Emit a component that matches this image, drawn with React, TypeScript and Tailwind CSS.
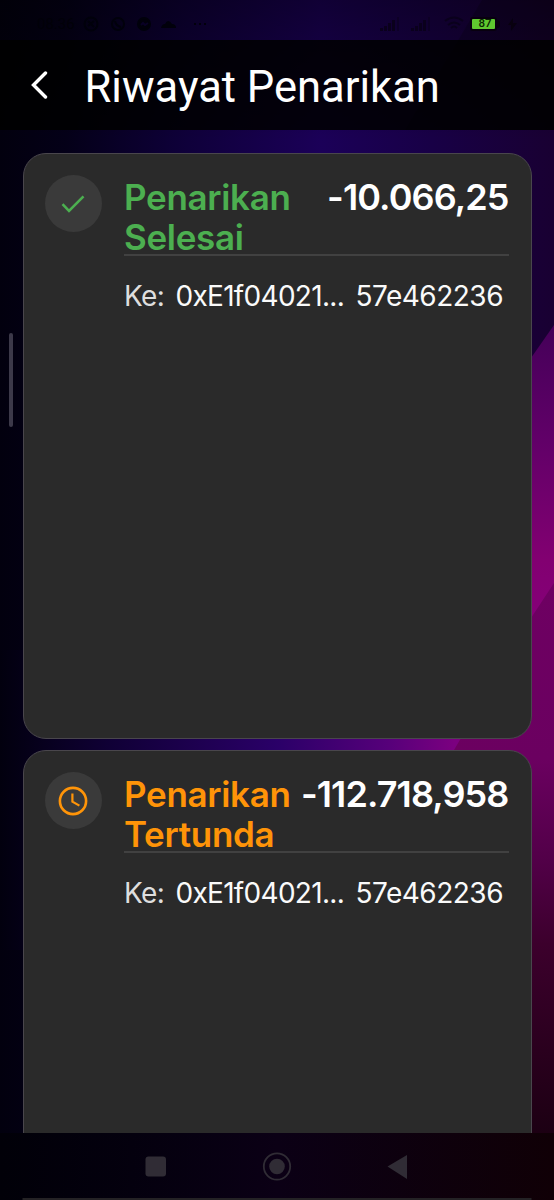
const withdrawals = [
  {
    status: "done",
    title: "Penarikan Selesai",
    amount: "-10.066,25",
    from: "0xE1f04021...",
    to: "57e462236",
  },
  {
    status: "pending",
    title: "Penarikan Tertunda",
    amount: "-112.718,958",
    from: "0xE1f04021...",
    to: "57e462236",
  },
];

function Wallpaper() {
  return (
    <svg
      className="absolute inset-0 -z-10"
      width="554"
      height="1200"
      viewBox="0 0 554 1200"
      aria-hidden="true"
    >
      <defs>
        <linearGradient id="base" x1="0" x2="1" y1="0" y2="0">
          <stop offset="0" stopColor="#02000e" />
          <stop offset="0.12" stopColor="#040018" />
          <stop offset="0.32" stopColor="#0e0038" />
          <stop offset="0.58" stopColor="#1b0058" />
          <stop offset="0.78" stopColor="#180046" />
          <stop offset="1" stopColor="#190032" />
        </linearGradient>
        <linearGradient id="top" x1="0" x2="0" y1="0" y2="1">
          <stop offset="0" stopColor="#000" stopOpacity="0.4" />
          <stop offset="1" stopColor="#000" stopOpacity="0" />
        </linearGradient>
        <linearGradient id="mid" x1="0" x2="1" y1="0" y2="0">
          <stop offset="0" stopColor="#02000e" />
          <stop offset="0.04" stopColor="#040016" />
          <stop offset="0.2" stopColor="#100036" />
          <stop offset="0.5" stopColor="#2a0068" />
          <stop offset="0.7" stopColor="#56007a" />
          <stop offset="0.82" stopColor="#7b0080" />
          <stop offset="1" stopColor="#7b0070" />
        </linearGradient>
        <linearGradient id="band" gradientUnits="userSpaceOnUse" x1="0" x2="0" y1="320" y2="620">
          <stop offset="0" stopColor="#430058" />
          <stop offset="0.4" stopColor="#610068" />
          <stop offset="0.8" stopColor="#820071" />
          <stop offset="1" stopColor="#850078" />
        </linearGradient>
        <linearGradient id="low" gradientUnits="userSpaceOnUse" x1="0" x2="0" y1="580" y2="1140">
          <stop offset="0" stopColor="#6e0062" />
          <stop offset="0.32" stopColor="#6b0060" />
          <stop offset="0.5" stopColor="#520048" />
          <stop offset="0.65" stopColor="#3c002c" />
          <stop offset="1" stopColor="#1b0012" />
        </linearGradient>
      </defs>
      <rect width="554" height="1200" fill="url(#base)" />
      <rect width="554" height="140" fill="url(#top)" />
      <path d="M482 0H554V130H405Z" fill="#000" opacity="0.2" />
      <rect y="650" width="554" height="300" fill="url(#mid)" />
      <path d="M554 325L531 358V760H554Z" fill="url(#band)" />
      <path d="M554 583L531 618L454 750L320 1000L210 1150H554Z" fill="url(#low)" />
    </svg>
  );
}

function Signal() {
  return (
    <svg width="22" height="15" viewBox="0 0 22 15" fill="#0a001c">
      <rect x="0" y="11" width="3" height="3" />
      <rect x="4" y="9" width="3" height="5" />
      <rect x="8" y="6" width="3" height="8" />
      <rect x="12" y="3" width="3" height="11" />
      <rect x="17" y="0" width="2" height="14" opacity="0.5" />
    </svg>
  );
}

function StatusBar() {
  return (
    <div className="flex h-10 items-center pt-2 pr-[37px] pl-[37px]">
      <span className="w-[42px] font-[Roboto] text-[15px] leading-4 text-[#010008]">08.36</span>
      <svg width="130" height="16" viewBox="0 0 130 16" fill="none" stroke="#01000b" strokeWidth="2">
        <circle cx="12" cy="8" r="6.5" />
        <path d="M9 10l6-5M9 5l6 6" />
        <circle cx="39" cy="8" r="6" />
        <path d="M36 5q1 5 6 6" />
        <circle cx="65" cy="8" r="6" fill="#01000b" />
        <path d="M62 9l2-2 2 2 3-2" stroke="#090025" />
        <path d="M82 12q1-4 4-4q3-6 7 0q4 0 4 4z" fill="#01000b" stroke="none" />
        <path d="M115 8h2m3 0h2m3 0h2" />
      </svg>
      <div className="ml-auto flex items-center">
        <Signal />
        <span className="w-[9px]" />
        <Signal />
        <svg className="ml-[11px]" width="20" height="16" viewBox="0 0 20 16" fill="none" stroke="#0a001c" strokeWidth="2">
          <path d="M1 5q9-7 18 0M4 9q6-5 12 0M7 12q3-3 6 0" />
        </svg>
        <span className="ml-[6px] flex h-[14px] w-[27px] items-center justify-center rounded-[3px] border-2 border-[#08000f] bg-[#5fc82f] pl-[3px] font-[Roboto] text-[11.5px] leading-none font-medium text-[#0b2503]">
          87
        </span>
        <span className="h-2 w-[3px] rounded-r-sm bg-[#08000f]" />
        <svg className="ml-[8px]" width="9" height="13" viewBox="0 0 9 13" fill="#08000f">
          <path d="M5 0L0 7h3v6l6-8H5z" />
        </svg>
      </div>
    </div>
  );
}

function ClockIcon() {
  return (
    <svg width="30" height="30" viewBox="0 0 30 30" fill="none" stroke="#ff9408">
      <circle cx="15" cy="15" r="13.1" strokeWidth="2.6" />
      <path d="M14.4 7.4V15.6L21.4 19.6" strokeWidth="2.2" />
    </svg>
  );
}

function WithdrawalCard({ item }: { item: (typeof withdrawals)[number] }) {
  const done = item.status === "done";
  return (
    <article className="flex h-[586px] shrink-0 items-start rounded-[23px] border border-[#49464c] bg-[#2a2a2a] pt-[21px] pr-[22px] pl-[21px]">
      <div className="flex h-[57px] w-[57px] shrink-0 items-center justify-center rounded-full bg-[#3a3a3a]">
        {done ? (
          <svg width="24" height="18" viewBox="0 0 24 18" fill="none" stroke="#4caf50" strokeWidth="2.6">
            <path d="M1.5 9.2L8 15.8L22.5 1.3" />
          </svg>
        ) : (
          <ClockIcon />
        )}
      </div>
      <div className="ml-[22.5px] min-w-0 flex-1">
        <div className="flex h-[81px] items-start justify-between border-b-2 border-[#414141] pt-[3px] text-[36px] leading-[39.5px] font-semibold tracking-[-0.9px]">
          <h2
            className={`w-[170px] shrink-0 text-[35px] tracking-[-0.3px] ${done ? "text-[#4caf50]" : "text-[#ff9408]"}`}
          >
            {item.title}
          </h2>
          <span className="whitespace-nowrap text-white">{item.amount}</span>
        </div>
        <p className="mt-[22px] flex text-[28px] leading-[36px] whitespace-nowrap text-[#fafafa]">
          <span className="w-[51.5px] shrink-0 tracking-[-0.7px] text-[#dedede]">Ke:</span>
          <span className="w-[180px] shrink-0 tracking-[-0.7px]">{item.from}</span>
          <span className="tracking-[-0.5px]">{item.to}</span>
        </p>
      </div>
    </article>
  );
}

export default function App() {
  return (
    <main className="relative isolate flex h-[1200px] w-[554px] flex-col overflow-hidden bg-black font-[Inter,sans-serif]">
      <Wallpaper />
      <StatusBar />
      <header className="flex h-[90px] shrink-0 items-center bg-black/85 pl-[31px]">
        <svg width="17" height="28" viewBox="0 0 17 28" fill="none" stroke="#fff" strokeWidth="3.4" strokeLinecap="round">
          <path d="M14.5 2L2.5 14L14.5 26" />
        </svg>
        <h1 className="ml-[36.5px] pt-[6px] font-[Roboto] text-[43.5px] leading-none whitespace-nowrap text-white">
          Riwayat Penarikan
        </h1>
      </header>
      <section className="flex h-[1003px] shrink-0 flex-col gap-[11px] overflow-hidden px-[22.5px] pt-[23px]">
        {withdrawals.map((item) => (
          <WithdrawalCard key={item.status} item={item} />
        ))}
      </section>

      <span className="absolute top-[333px] left-[9px] h-[94px] w-[4px] rounded-full bg-[#3c3949]" />

      <nav className="flex h-[67px] shrink-0 bg-linear-to-r from-[#010008] via-[#0b0015] to-[#100006]">
        <svg width="554" height="67" viewBox="0 0 554 67" fill="#302c35">
          <rect x="145.5" y="23.5" width="20.5" height="20" rx="3" />
          <circle cx="277" cy="33.5" r="13.2" fill="none" stroke="#302c35" strokeWidth="1.8" />
          <circle cx="277" cy="33.5" r="7.8" />
          <path d="M387.5 33.5L407 22V46Z" />
          <path d="M22.5 65H531.5V67H22.5Z" fill="#242225" />
        </svg>
      </nav>
    </main>
  );
}
